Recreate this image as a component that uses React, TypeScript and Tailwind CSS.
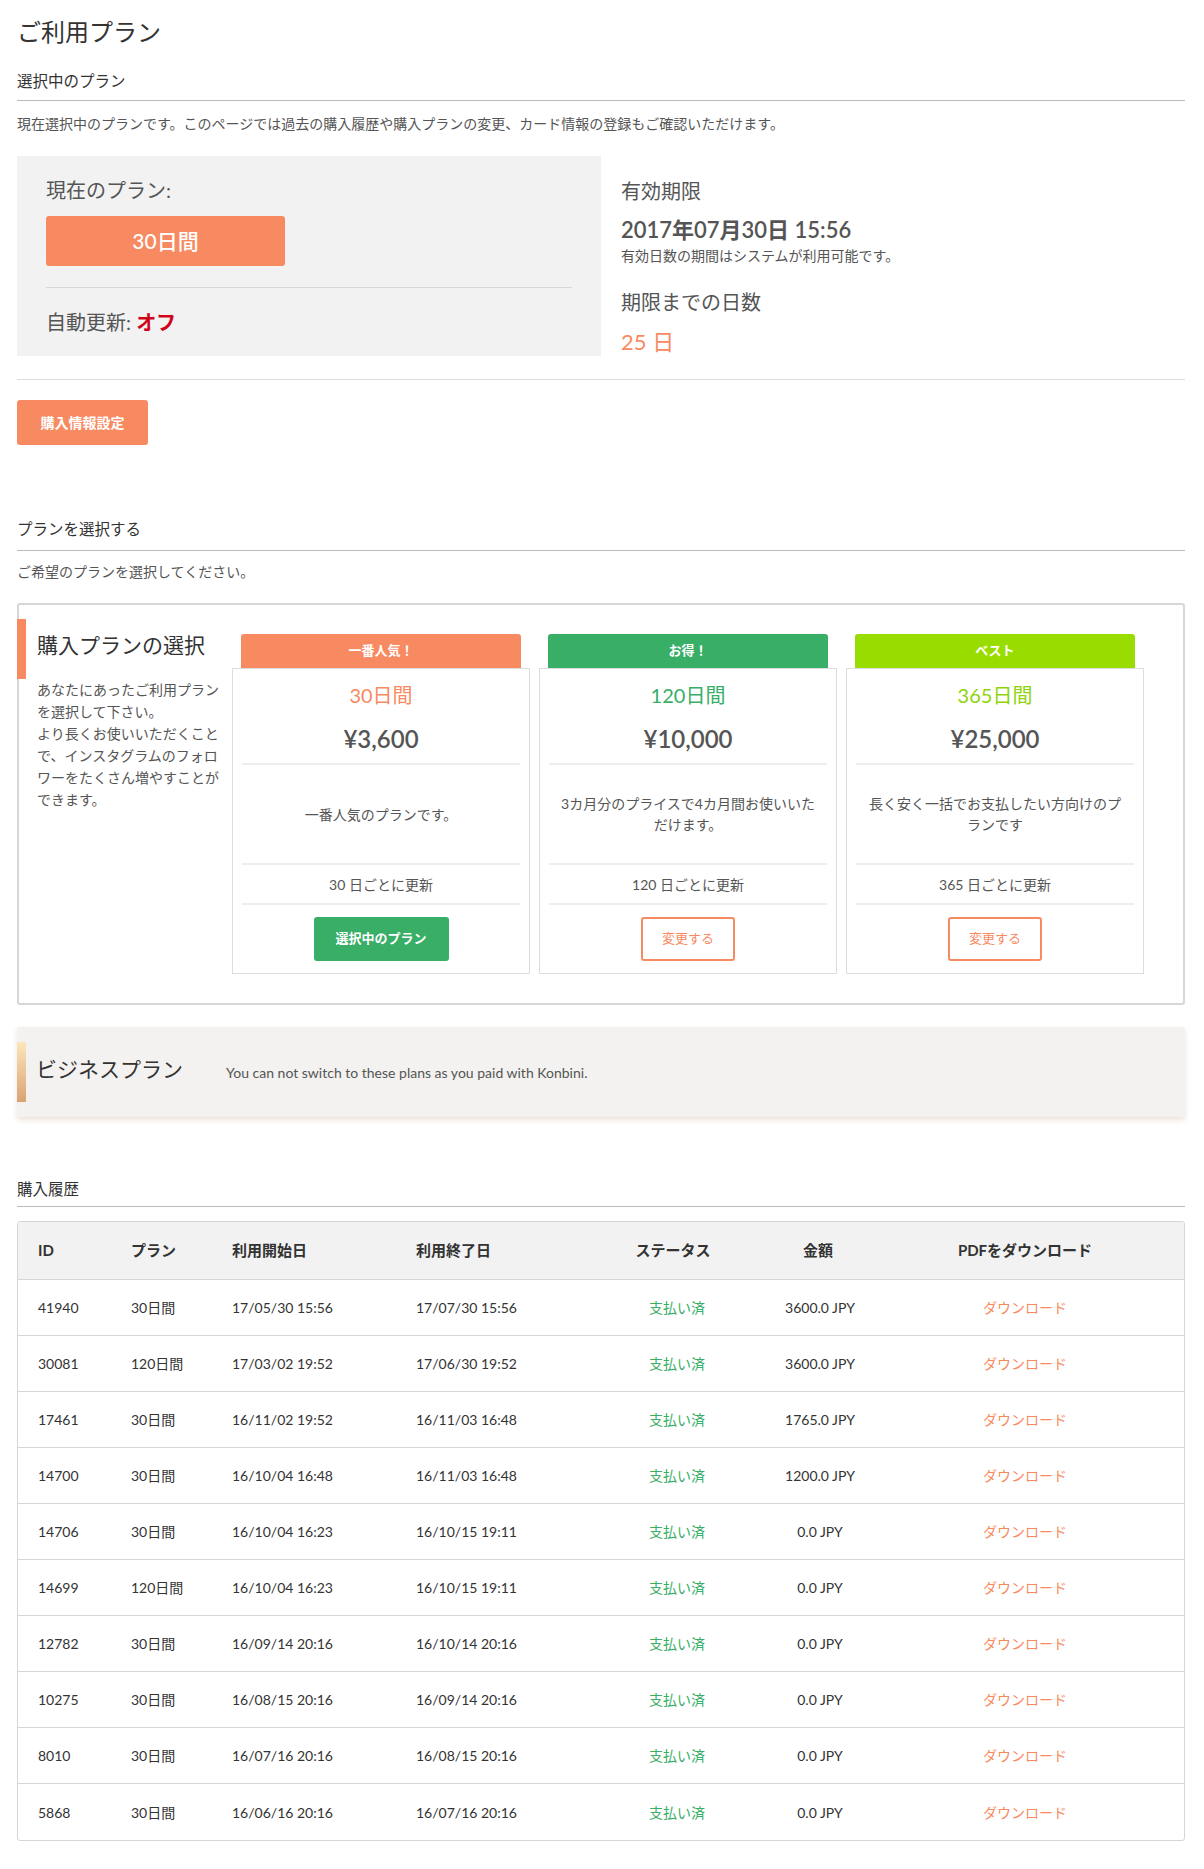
import React from "react";

const plans = [
  {
    tab: "一番人気！",
    tabCls: "bg-[#f88a62]",
    name: "30日間",
    nameCls: "text-[#f88a62]",
    price: "¥3,600",
    desc: "一番人気のプランです。",
    renew: "30 日ごとに更新",
    current: true,
  },
  {
    tab: "お得！",
    tabCls: "bg-[#38ae67]",
    name: "120日間",
    nameCls: "text-[#38ae67]",
    price: "¥10,000",
    desc: "3カ月分のプライスで4カ月間お使いいただけます。",
    renew: "120 日ごとに更新",
    current: false,
  },
  {
    tab: "ベスト",
    tabCls: "bg-[#99dd00]",
    name: "365日間",
    nameCls: "text-[#8fd40c]",
    price: "¥25,000",
    desc: "長く安く一括でお支払したい方向けのプランです",
    renew: "365 日ごとに更新",
    current: false,
  },
];

const rows = [
  ["41940", "30日間", "17/05/30 15:56", "17/07/30 15:56", "3600.0 JPY"],
  ["30081", "120日間", "17/03/02 19:52", "17/06/30 19:52", "3600.0 JPY"],
  ["17461", "30日間", "16/11/02 19:52", "16/11/03 16:48", "1765.0 JPY"],
  ["14700", "30日間", "16/10/04 16:48", "16/11/03 16:48", "1200.0 JPY"],
  ["14706", "30日間", "16/10/04 16:23", "16/10/15 19:11", "0.0 JPY"],
  ["14699", "120日間", "16/10/04 16:23", "16/10/15 19:11", "0.0 JPY"],
  ["12782", "30日間", "16/09/14 20:16", "16/10/14 20:16", "0.0 JPY"],
  ["10275", "30日間", "16/08/15 20:16", "16/09/14 20:16", "0.0 JPY"],
  ["8010", "30日間", "16/07/16 20:16", "16/08/15 20:16", "0.0 JPY"],
  ["5868", "30日間", "16/06/16 20:16", "16/07/16 20:16", "0.0 JPY"],
];

const gridCols = "grid grid-cols-[93px_100px_185px_190px_182px_104px_1fr]";

export default function App() {
  return (
    <div className="w-[1204px] min-h-[1869px] bg-white pl-[17px] pr-[19px] pt-[17px] pb-[28px] text-[#333] font-[family-name:Lato,'Noto_Sans_CJK_JP',sans-serif]">
      <h1 className="text-[24px] leading-[30px] font-normal text-[#333]">ご利用プラン</h1>

      <div className="mt-[23px] pb-[8px] border-b border-[#bbbbbb] text-[15.5px] leading-[22px] text-[#333]">
        選択中のプラン
      </div>
      <p className="mt-[13px] text-[14px] leading-[20px] text-[#555]">
        現在選択中のプランです。このページでは過去の購入履歴や購入プランの変更、カード情報の登録もご確認いただけます。
      </p>

      <div className="mt-[22px] flex">
        <div className="w-[584px] h-[200px] bg-[#f2f2f2] px-[29px] pt-[20px]">
          <div className="text-[20px] leading-[28px] text-[#555]">現在のプラン:</div>
          <div className="mt-[12px] w-[239px] h-[50px] rounded-[3px] bg-[#f88a62] flex items-center justify-center text-white text-[21px] font-medium">
            30日間
          </div>
          <div className="mt-[21px] border-t border-[#d8d8d8]" />
          <div className="mt-[20px] text-[20px] leading-[28px] text-[#555]">
            自動更新: <span className="font-bold text-[#d0021b]">オフ</span>
          </div>
        </div>
        <div className="ml-[20px] pt-[21px] text-[#555]">
          <div className="text-[20px] leading-[28px]">有効期限</div>
          <div className="mt-[11px] text-[22px] leading-[28px] font-semibold">2017年07月30日 15:56</div>
          <div className="mt-[3px] text-[14px] leading-[18px]">有効日数の期間はシステムが利用可能です。</div>
          <div className="mt-[23px] text-[20px] leading-[28px]">期限までの日数</div>
          <div className="mt-[12px] text-[22px] leading-[28px] text-[#f88a62]">25 日</div>
        </div>
      </div>

      <div className="mt-[23px] border-t border-[#dddddd]" />

      <button className="mt-[20px] w-[131px] h-[45px] rounded-[3px] bg-[#f88a62] text-white text-[14px] font-bold flex items-center justify-center">
        購入情報設定
      </button>

      <div className="mt-[73px] pb-[10px] border-b border-[#bbbbbb] text-[15.5px] leading-[22px] text-[#333]">
        プランを選択する
      </div>
      <p className="mt-[11px] text-[14px] leading-[20px] text-[#555]">ご希望のプランを選択してください。</p>

      <div className="relative mt-[21px] border-2 border-[#d6d6d6] rounded-[3px] flex">
        <div className="absolute left-[-2px] top-[14px] w-[9px] h-[60px] bg-[#f88a62]" />
        <div className="w-[213px] pl-[18px] pt-[26px]">
          <div className="text-[21px] leading-[28px] text-[#333]">購入プランの選択</div>
          <p className="mt-[20px] w-[189px] text-[14px] leading-[22px] text-[#555]">
            あなたにあったご利用プランを選択して下さい。
            <br />
            より長くお使いいただくことで、インスタグラムのフォロワーをたくさん増やすことができます。
          </p>
        </div>
        <div className="pt-[29px] pb-[29px] flex gap-[9px]">
          {plans.map((p) => (
            <div key={p.name} className="w-[298px]">
              <div
                className={`mx-[9px] h-[34px] rounded-t-[3px] flex items-center justify-center text-white text-[13px] font-bold ${p.tabCls}`}
              >
                {p.tab}
              </div>
              <div className="h-[306px] border border-[#dddddd] pt-[12px] px-[9px] text-center">
                <div className={`text-[20px] leading-[28px] ${p.nameCls}`}>{p.name}</div>
                <div className="mt-[14px] text-[24px] leading-[32px] font-semibold text-[#555]">{p.price}</div>
                <div className="mt-[8px] border-t-2 border-[#eeeeee]" />
                <div className="h-[98px] flex items-center justify-center px-[9px]">
                  <p className="text-[14px] leading-[21px] text-[#555]">{p.desc}</p>
                </div>
                <div className="border-t-2 border-[#eeeeee]" />
                <div className="h-[38px] flex items-center justify-center text-[14px] text-[#555]">{p.renew}</div>
                <div className="border-t-2 border-[#eeeeee]" />
                <div className="mt-[12px] flex justify-center">
                  {p.current ? (
                    <button className="w-[135px] h-[44px] rounded-[3px] bg-[#38ae67] text-white text-[13px] font-bold">
                      選択中のプラン
                    </button>
                  ) : (
                    <button className="w-[94px] h-[44px] rounded-[3px] border-2 border-[#f88a62] bg-white text-[#f88a62] text-[13px]">
                      変更する
                    </button>
                  )}
                </div>
              </div>
            </div>
          ))}
        </div>
      </div>

      <div className="relative mt-[22px] h-[90px] rounded-[3px] bg-[#f3f2f0] shadow-[0_3px_5px_rgba(190,160,130,0.3)] flex items-center pl-[19px]">
        <div className="absolute left-0 top-[15px] w-[9px] h-[60px] bg-linear-to-b from-[#fde6bd] to-[#d9a373]" />
        <div className="pb-[6px] text-[21px] leading-[28px] text-[#333]">ビジネスプラン</div>
        <div className="ml-[43px] text-[14px] text-[#555]">You can not switch to these plans as you paid with Konbini.</div>
      </div>

      <div className="mt-[61px] pb-[6px] border-b border-[#bbbbbb] text-[15.5px] leading-[22px] text-[#333]">
        購入履歴
      </div>

      <div className="mt-[14px] border border-[#d6d6d6] rounded-[3px] overflow-hidden text-[14px]">
        <div className={`${gridCols} h-[58px] items-center bg-[#f2f2f2] border-b border-[#d6d6d6] font-bold text-[15px] text-[#333]`}>
          <div className="pl-[20px]">ID</div>
          <div className="pl-[20px]">プラン</div>
          <div className="pl-[21px]">利用開始日</div>
          <div className="pl-[20px]">利用終了日</div>
          <div className="text-center pr-[8px]">ステータス</div>
          <div className="text-center pr-[4px]">金額</div>
          <div className="text-center pr-[6px]">PDFをダウンロード</div>
        </div>
        {rows.map((r, i) => (
          <div
            key={r[0]}
            className={`${gridCols} h-[56px] items-center text-[#333] ${i < rows.length - 1 ? "border-b border-[#d6d6d6]" : ""}`}
          >
            <div className="pl-[20px]">{r[0]}</div>
            <div className="pl-[20px]">{r[1]}</div>
            <div className="pl-[21px]">{r[2]}</div>
            <div className="pl-[20px]">{r[3]}</div>
            <div className="text-center text-[#38ae67]">支払い済</div>
            <div className="text-center">{r[4]}</div>
            <div className="text-center pr-[6px] text-[#f88a62]">ダウンロード</div>
          </div>
        ))}
      </div>
    </div>
  );
}
